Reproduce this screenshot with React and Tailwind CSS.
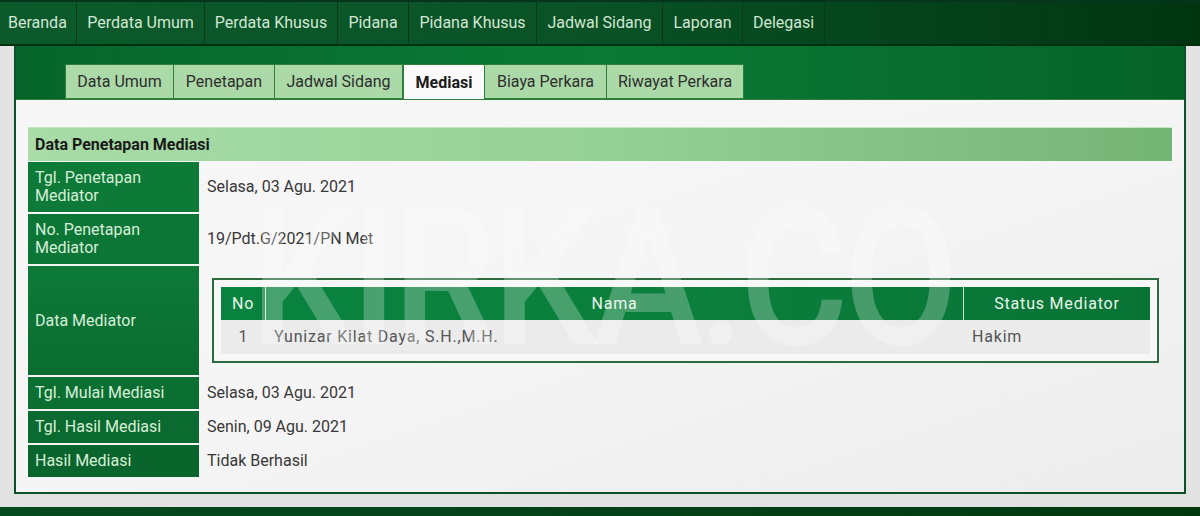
import React from "react";

const navItems = [
  { label: "Beranda", w: "w-[77px]", pad: "pl-[8px] justify-start" },
  { label: "Perdata Umum", w: "w-[128px]", pad: "justify-center" },
  { label: "Perdata Khusus", w: "w-[133px]", pad: "justify-center" },
  { label: "Pidana", w: "w-[71px]", pad: "justify-center" },
  { label: "Pidana Khusus", w: "w-[128px]", pad: "justify-center" },
  { label: "Jadwal Sidang", w: "w-[126px]", pad: "justify-center" },
  { label: "Laporan", w: "w-[80px]", pad: "justify-center" },
  { label: "Delegasi", w: "w-[82px]", pad: "justify-center" },
];

const tabs = [
  { label: "Data Umum", w: "w-[109px]" },
  { label: "Penetapan", w: "w-[102px]" },
  { label: "Jadwal Sidang", w: "w-[129px]" },
  { label: "Mediasi", w: "w-[82px]", active: true },
  { label: "Biaya Perkara", w: "w-[123px]" },
  { label: "Riwayat Perkara", w: "w-[138px]" },
];

function Label({ children, h, tone }) {
  return (
    <div
      className={`w-[171px] shrink-0 ${h} ${tone} flex items-center pl-[7px] text-[16px] leading-[18px] text-[#d9eed9]`}
    >
      {children}
    </div>
  );
}

function Row({ label, h, tone, children }) {
  return (
    <div className="flex">
      <Label h={h} tone={tone}>
        {label}
      </Label>
      <div className="flex-1 flex items-center pl-[8px] text-[16px] text-[#383838]">
        {children}
      </div>
    </div>
  );
}

function MediatorTable() {
  return (
    <div className="ml-[13px] mr-[13px] w-full border-2 border-[#2a6c3e] p-[7px] bg-[#f7f7f7]">
      <div className="flex h-[33px] bg-gradient-to-r from-[#0a8340] via-[#0b7f3c] to-[#087335] text-[16px] tracking-[0.8px] text-[#e9f6ea]">
        <div className="w-[45px] flex items-center justify-center border-r border-[#cfe3d2]">No</div>
        <div className="flex-1 flex items-center justify-center border-r border-[#cfe3d2]">Nama</div>
        <div className="w-[186px] flex items-center justify-center">Status Mediator</div>
      </div>
      <div className="flex h-[34px] bg-[#ebebeb] text-[16px] tracking-[0.8px] text-[#555555]">
        <div className="w-[45px] flex items-center justify-center">1</div>
        <div className="flex-1 flex items-center pl-[8px]">Yunizar Kilat Daya, S.H.,M.H.</div>
        <div className="w-[186px] flex items-center pl-[8px]">Hakim</div>
      </div>
    </div>
  );
}

export default function App() {
  return (
    <div className="relative w-[1200px] h-[516px] overflow-hidden bg-[#e2e2e2] font-['Roboto','Liberation_Sans',sans-serif] flex flex-col">
      {/* top navigation */}
      <nav className="h-[46px] shrink-0 flex bg-gradient-to-r from-[#0c5a2b] via-[#0a5226] to-[#013510] border-t-2 border-b-2 border-t-[#06361a] border-b-[#03300f]">
        {navItems.map((n) => (
          <div
            key={n.label}
            className={`${n.w} ${n.pad} flex items-center border-r border-[#063a1a] text-[16px] text-[#d2e6d3]`}
          >
            {n.label}
          </div>
        ))}
      </nav>

      {/* main card */}
      <div className="px-[14px]">
        <div className="h-[448px] border-x-2 border-b-2 border-[#0d4f27] flex flex-col">
          {/* tab strip */}
          <div className="h-[53px] shrink-0 bg-gradient-to-r from-[#07652b] via-[#0a7a36] to-[#066328] flex items-end pl-[49px]">
            {tabs.map((t) =>
              t.active ? (
                <div
                  key={t.label}
                  className={`${t.w} h-[36px] -mb-px bg-[#fafafa] border-x border-t border-[#2d7f3b] flex items-center justify-center text-[16px] font-bold text-[#1b1b1b]`}
                >
                  {t.label}
                </div>
              ) : (
                <div
                  key={t.label}
                  className={`${t.w} h-[35px] bg-[#abd9a8] border border-[#2d7f3b] -ml-px first:ml-0 flex items-center justify-center text-[16px] text-[#2e2e2e]`}
                >
                  {t.label}
                </div>
              )
            )}
          </div>

          {/* content */}
          <div className="flex-1 border-t border-[#2d7f3b] bg-gradient-to-br from-[#f7f7f7] via-[#f5f5f5] to-[#ececec] px-[12px] pt-[27px]">
            <div className="h-[34px] flex items-center pl-[7px] bg-gradient-to-r from-[#a9dca8] via-[#96d196] to-[#74b475] border-t border-[#c6e9c4] text-[16px] font-bold text-[#1a1a1a]">
              Data Penetapan Mediasi
            </div>
            <div className="flex flex-col gap-[2px] pt-[1px]">
              <Row label={<span>Tgl. Penetapan<br />Mediator</span>} h="h-[50px]" tone="bg-[#0d7a38]">
                Selasa, 03 Agu. 2021
              </Row>
              <Row label={<span>No. Penetapan<br />Mediator</span>} h="h-[50px]" tone="bg-[#0c7636]">
                19/Pdt.G/2021/PN Met
              </Row>
              <div className="flex">
                <Label h="h-[109px]" tone="bg-gradient-to-b from-[#0d7a38] to-[#0a6c30]">
                  Data Mediator
                </Label>
                <div className="flex-1 flex items-center">
                  <MediatorTable />
                </div>
              </div>
              <Row label="Tgl. Mulai Mediasi" h="h-[32px]" tone="bg-[#0b6f32]">
                Selasa, 03 Agu. 2021
              </Row>
              <Row label="Tgl. Hasil Mediasi" h="h-[32px]" tone="bg-[#0a6a2f]">
                Senin, 09 Agu. 2021
              </Row>
              <Row label="Hasil Mediasi" h="h-[32px]" tone="bg-[#09652c]">
                Tidak Berhasil
              </Row>
            </div>
          </div>
        </div>
      </div>

      {/* footer strip */}
      <div className="mt-auto h-[9px] bg-gradient-to-r from-[#064a20] to-[#03380f]" />

      {/* watermark */}
      <div className="pointer-events-none absolute left-[250px] top-[183px] origin-left scale-x-[0.87] text-[192px] leading-none font-medium tracking-[-6px] text-white/25 select-none">
        KIRKA.CO
      </div>
    </div>
  );
}
